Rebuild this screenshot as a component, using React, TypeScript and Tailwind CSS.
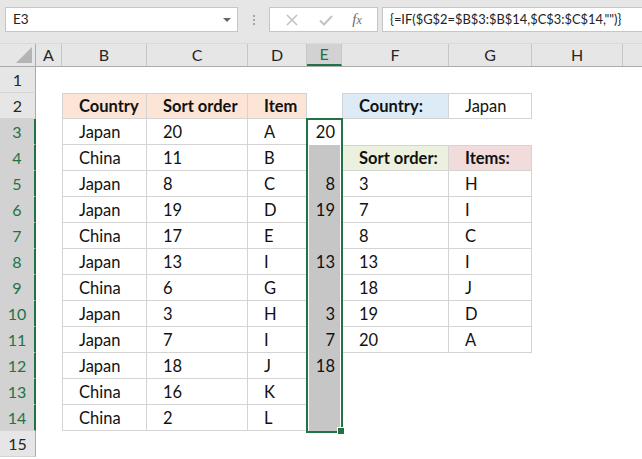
import clsx from "clsx"
import type { ReactNode } from "react"

// column widths: row header, A..H, rest
const COLS = { hdr: 36, A: 26, B: 85, C: 101, D: 59, E: 35, F: 107, G: 83, H: 91 }

type Row = {
  n: number
  b?: string
  c?: string
  d?: string
  e?: string
  f?: string
  g?: string
}

const rows: Row[] = [
  { n: 1 },
  { n: 2, b: "Country", c: "Sort order", d: "Item", f: "Country:", g: "Japan" },
  { n: 3, b: "Japan", c: "20", d: "A", e: "20" },
  { n: 4, b: "China", c: "11", d: "B", f: "Sort order:", g: "Items:" },
  { n: 5, b: "Japan", c: "8", d: "C", e: "8", f: "3", g: "H" },
  { n: 6, b: "Japan", c: "19", d: "D", e: "19", f: "7", g: "I" },
  { n: 7, b: "China", c: "17", d: "E", f: "8", g: "C" },
  { n: 8, b: "Japan", c: "13", d: "I", e: "13", f: "13", g: "I" },
  { n: 9, b: "China", c: "6", d: "G", f: "18", g: "J" },
  { n: 10, b: "Japan", c: "3", d: "H", e: "3", f: "19", g: "D" },
  { n: 11, b: "Japan", c: "7", d: "I", e: "7", f: "20", g: "A" },
  { n: 12, b: "Japan", c: "18", d: "J", e: "18" },
  { n: 13, b: "China", c: "16", d: "K" },
  { n: 14, b: "China", c: "2", d: "L" },
  { n: 15 },
]

function Cell({
  w,
  children,
  border,
  top,
  left,
  className,
}: {
  w: number
  children?: ReactNode
  border?: boolean
  top?: boolean
  left?: boolean
  className?: string
}) {
  return (
    <div
      className={clsx(
        "h-full shrink-0 flex items-center pl-4 pt-px whitespace-nowrap",
        border && "border-r border-b border-[#d4d4d4]",
        border && top && "border-t",
        border && left && "border-l",
        className,
      )}
      style={{ width: w }}
    >
      {children}
    </div>
  )
}

function ColHeader({ label, w, active }: { label: string; w: number; active?: boolean }) {
  return (
    <div
      className={clsx(
        "h-full shrink-0 flex items-center justify-center border-r border-[#c6c6c6] text-[16px]",
        active ? "bg-[#d2d2d2] text-[#217346] border-b-2 border-b-[#217346]" : "text-[#262626]",
      )}
      style={{ width: w }}
    >
      {label}
    </div>
  )
}

export default function App() {
  return (
    <div
      className="relative w-[642px] h-[459px] overflow-hidden bg-white text-[#111] text-[16.5px]"
      style={{ fontFamily: "Lato, 'Open Sans', sans-serif" }}
    >
      {/* Formula bar */}
      <div className="h-[43px] bg-[#e6e6e6] flex items-start pt-[7px] pl-[5px]">
        <div className="w-[233px] h-[25px] bg-white border border-[#c6c6c6] flex items-center justify-between pl-[7px] pr-[6px] text-[13.5px] text-[#222]">
          <span>E3</span>
          <span className="w-0 h-0 border-l-[4px] border-r-[4px] border-t-[4px] border-l-transparent border-r-transparent border-t-[#666]" />
        </div>
        <div className="w-[31px] h-[25px] flex flex-col items-center justify-center gap-[2px]">
          <span className="w-[2px] h-[2px] bg-[#a6a6a6]" />
          <span className="w-[2px] h-[2px] bg-[#a6a6a6]" />
          <span className="w-[2px] h-[2px] bg-[#a6a6a6]" />
        </div>
        <div className="w-[109px] h-[25px] bg-white border border-[#c6c6c6] flex items-center justify-around px-[6px]">
          <svg width="14" height="14" viewBox="0 0 14 14">
            <path d="M2 2 L12 12 M12 2 L2 12" stroke="#c3c3c3" strokeWidth="1.6" />
          </svg>
          <svg width="16" height="14" viewBox="0 0 16 14">
            <path d="M2 7.5 L6 11.5 L14 3" stroke="#c3c3c3" strokeWidth="2" fill="none" />
          </svg>
          <span
            className="italic text-[15px] text-[#6b6b6b] leading-none"
            style={{ fontFamily: "'Liberation Serif', serif" }}
          >
            f<span className="text-[12px]">x</span>
          </span>
        </div>
        <div className="ml-[4px] flex-1 h-[25px] bg-white border border-r-0 border-[#c6c6c6] flex items-center pl-[7px] text-[12.9px] text-[#222] whitespace-nowrap">
          {'{=IF($G$2=$B$3:$B$14,$C$3:$C$14,"")}'}
        </div>
      </div>

      {/* Column headers */}
      <div className="h-[24px] flex bg-[#e6e6e6] border-t border-[#d9d9d9] border-b border-b-[#ababab]">
        <div
          className="h-full shrink-0 border-r border-[#ababab] flex items-end justify-end pr-[3px] pb-[3px]"
          style={{ width: COLS.hdr }}
        >
          <svg width="16" height="16" viewBox="0 0 16 16">
            <polygon points="16,0 16,16 0,16" fill="#b4b4b4" />
          </svg>
        </div>
        <ColHeader label="A" w={COLS.A} />
        <ColHeader label="B" w={COLS.B} />
        <ColHeader label="C" w={COLS.C} />
        <ColHeader label="D" w={COLS.D} />
        <ColHeader label="E" w={COLS.E} active />
        <ColHeader label="F" w={COLS.F} />
        <ColHeader label="G" w={COLS.G} />
        <ColHeader label="H" w={COLS.H} />
        <ColHeader label="" w={40} />
      </div>

      {/* Grid rows */}
      {rows.map((r) => {
        const sel = r.n >= 3 && r.n <= 14
        const tbl = r.n >= 2 && r.n <= 14
        const hdr = r.n === 2
        const fg = r.n === 2 || (r.n >= 4 && r.n <= 11)
        const fgTop = r.n === 2 || r.n === 4
        return (
          <div key={r.n} className="h-[26px] flex">
            <div
              className={clsx(
                "h-full shrink-0 flex items-center justify-center border-b border-[#d4d4d4] text-[16px]",
                sel
                  ? "bg-[#d2d2d2] text-[#217346] border-r-2 border-r-[#217346]"
                  : "bg-[#e6e6e6] text-[#262626] border-r border-r-[#ababab]",
              )}
              style={{ width: COLS.hdr }}
            >
              {r.n}
            </div>
            <Cell w={COLS.A} />
            <Cell w={COLS.B} border={tbl} top={hdr} left className={clsx(hdr && "bg-[#fce4d6] font-bold")}>
              {r.b}
            </Cell>
            <Cell w={COLS.C} border={tbl} top={hdr} className={clsx(hdr && "bg-[#fce4d6] font-bold")}>
              {r.c}
            </Cell>
            <Cell w={COLS.D} border={tbl} top={hdr} className={clsx(hdr && "bg-[#fce4d6] font-bold")}>
              {r.d}
            </Cell>
            <div
              className={clsx(
                "h-full shrink-0 flex items-center justify-end pr-[7px] pt-px",
                sel && r.n > 3 && "bg-[#c6c6c6] shadow-[inset_2px_0_0_#fff,inset_-2px_0_0_#fff]",
              )}
              style={{ width: COLS.E }}
            >
              {r.e}
            </div>
            <Cell
              w={COLS.F}
              border={fg}
              top={fgTop}
              left
              className={clsx(
                r.n === 2 && "bg-[#ddebf7] font-bold",
                r.n === 4 && "bg-[#ebf1de] font-bold",
              )}
            >
              {r.f}
            </Cell>
            <Cell w={COLS.G} border={fg} top={fgTop} className={clsx(r.n === 4 && "bg-[#f2dcdb] font-bold")}>
              {r.g}
            </Cell>
          </div>
        )
      })}

      {/* Selection outline E3:E14 */}
      <div className="absolute left-[306px] top-[118px] w-[37px] h-[315px] border-2 border-[#217346] pointer-events-none" />
      <div className="absolute left-[338px] top-[428px] w-[6px] h-[6px] bg-[#217346] outline outline-1 outline-white pointer-events-none" />
    </div>
  )
}
